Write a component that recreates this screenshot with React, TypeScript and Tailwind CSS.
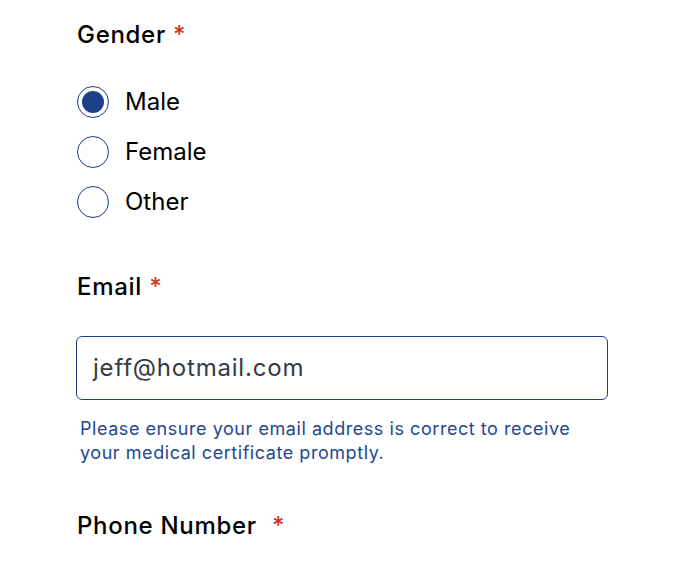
import React from "react";

const font = { fontFamily: "Inter, 'Noto Sans', sans-serif" };

function Radio({ label, checked }: { label: string; checked?: boolean }) {
  return (
    <label className="flex items-center h-8 gap-4 cursor-pointer">
      <span className="w-8 h-8 rounded-full border border-[#1e3f8a] flex items-center justify-center bg-white">
        {checked && <span className="w-[22px] h-[22px] rounded-full bg-[#1e3f8a]" />}
      </span>
      <span className="text-[24px] leading-8 text-black">{label}</span>
    </label>
  );
}

export default function App() {
  return (
    <div className="w-[684px] h-[564px] bg-white overflow-hidden pl-[77px] pr-[76px]" style={font}>
      <div className="pt-[19px]">
        <div className="text-[24px] leading-8 text-black font-medium tracking-[0.7px]">
          Gender <span className="text-[#d0342c]">*</span>
        </div>
        <div className="mt-[35px] flex flex-col gap-[18px]">
          <Radio label="Male" checked />
          <Radio label="Female" />
          <Radio label="Other" />
        </div>
        <div className="mt-[53px] text-[24px] leading-8 text-black font-medium tracking-[0.7px]">
          Email <span className="text-[#d0342c]">*</span>
        </div>
        <div className="mt-[33px] h-16 w-[532px] rounded-md border border-[#1e3f8a] flex items-center px-4 -ml-px">
          <span className="text-[24px] text-[#343a46] tracking-[0.8px]">jeff@hotmail.com</span>
        </div>
        <p className="mt-[17px] pl-[3px] text-[18px] leading-6 text-[#24478f] tracking-[0.55px]">
          Please ensure your email address is correct to receive
          <br />
          your medical certificate promptly.
        </p>
        <div className="mt-[45px] text-[24px] leading-8 text-black font-medium tracking-[0.7px]">
          Phone Number <span className="ml-2 text-[#d0342c]">*</span>
        </div>
      </div>
    </div>
  );
}
